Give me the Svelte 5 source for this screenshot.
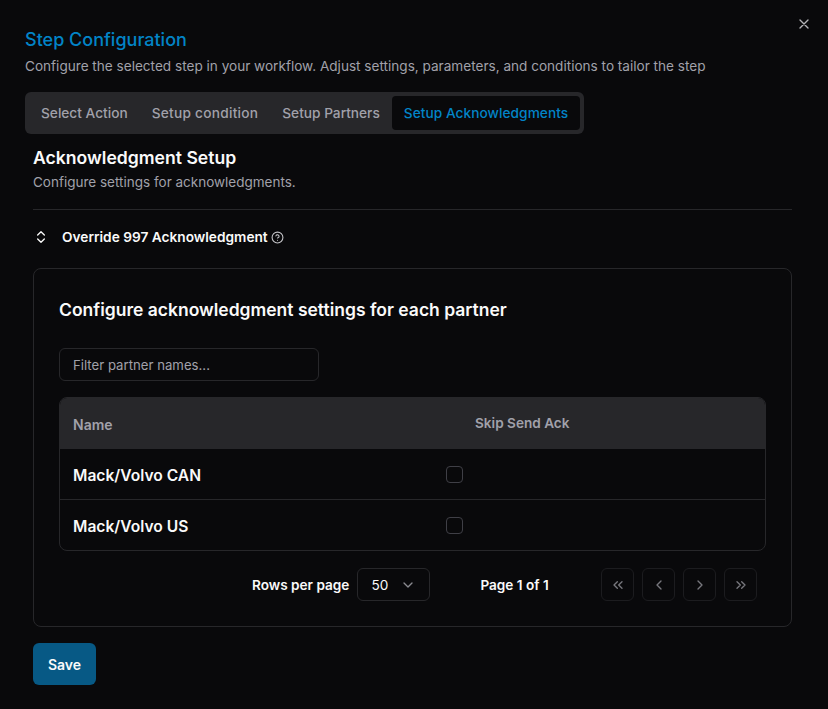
<script>
	const tabs = ['Select Action', 'Setup condition', 'Setup Partners', 'Setup Acknowledgments'];
	const partners = ['Mack/Volvo CAN', 'Mack/Volvo US'];
	const pager = [
		'm11 17-5-5 5-5M18 17l-5-5 5-5',
		'm15 18-6-6 6-6',
		'm9 18 6-6-6-6',
		'm6 17 5-5-5-5M13 17l5-5-5-5'
	];
</script>

<div class="dialog">
	<button class="close" aria-label="Close">
		<svg viewBox="0 0 24 24" width="16" height="16"><path d="M18 6 6 18M6 6l12 12" /></svg>
	</button>

	<h1>Step Configuration</h1>
	<p class="lead">Configure the selected step in your workflow. Adjust settings, parameters, and conditions to tailor the step</p>

	<div class="tabs">
		{#each tabs as tab, i}
			<div class="tab" class:active={i === tabs.length - 1}>{tab}</div>
		{/each}
	</div>

	<div class="content">
		<h2>Acknowledgment Setup</h2>
		<p class="hint">Configure settings for acknowledgments.</p>
		<div class="rule"></div>

		<div class="override">
			<svg class="updown" viewBox="0 0 24 24" width="16" height="16"><path d="m7 15 5 5 5-5M7 9l5-5 5 5" /></svg>
			<span>Override 997 Acknowledgment</span>
			<svg class="help" viewBox="0 0 24 24" width="13" height="13">
				<circle cx="12" cy="12" r="10" />
				<path d="M9.1 9a3 3 0 0 1 5.8 1c0 2-3 3-3 3M12 17h.01" />
			</svg>
		</div>

		<section class="card">
			<h3>Configure acknowledgment settings for each partner</h3>
			<div class="filter">Filter partner names...</div>

			<div class="table">
				<div class="row head">
					<div class="name">Name</div>
					<div class="skip">Skip Send Ack</div>
				</div>
				{#each partners as partner}
					<div class="row">
						<div class="name">{partner}</div>
						<div class="check"><span class="box"></span></div>
					</div>
				{/each}
			</div>

			<div class="footer">
				<span class="label">Rows per page</span>
				<div class="select">
					<span>50</span>
					<svg viewBox="0 0 24 24" width="16" height="16"><path d="m6 9 6 6 6-6" /></svg>
				</div>
				<span class="page">Page 1 of 1</span>
				<div class="pager">
					{#each pager as d}
						<div class="pg"><svg viewBox="0 0 24 24" width="16" height="16"><path {d} /></svg></div>
					{/each}
				</div>
			</div>
		</section>

		<button class="save">Save</button>
	</div>
</div>

<style>
	:global(body) {
		background: #09090b;
	}

	.dialog {
		position: relative;
		box-sizing: border-box;
		height: 709px;
		padding: 28px 36px 0 25px;
		background: #09090b;
		color: #fafafa;
		font-family: Inter, "Noto Sans", sans-serif;
		font-size: 14px;
		overflow: hidden;
	}

	svg path,
	svg circle {
		fill: none;
		stroke: currentColor;
		stroke-width: 2;
		stroke-linecap: round;
		stroke-linejoin: round;
	}

	.close {
		position: absolute;
		top: 16px;
		right: 16px;
		display: flex;
		padding: 0;
		background: none;
		border: none;
		color: #b4b4b8;
	}

	h1 {
		margin: 0;
		font-size: 18px;
		line-height: 23px;
		font-weight: 500;
		color: #0284c7;
	}

	.lead {
		margin: 5px 0 0;
		font-size: 13.58px;
		line-height: 20px;
		color: #a1a1aa;
		white-space: nowrap;
	}

	.tabs {
		display: inline-flex;
		margin-top: 16px;
		padding: 4px;
		height: 42px;
		box-sizing: border-box;
		background: #27272a;
		border-radius: 6px;
	}

	.tab {
		display: flex;
		align-items: center;
		padding: 0 12px;
		border-radius: 4px;
		font-size: 13.7px;
		font-weight: 500;
		color: #a1a1aa;
		white-space: nowrap;
	}

	.tab:nth-child(2) {
		letter-spacing: 0.25px;
	}

	.tab.active {
		background: #09090b;
		color: #0284c7;
		letter-spacing: 0.05px;
	}

	.content {
		margin-left: 8px;
	}

	h2 {
		margin: 12px 0 0;
		font-size: 17.6px;
		line-height: 24px;
		font-weight: 600;
	}

	.hint {
		margin: 3px 0 0;
		font-size: 13.5px;
		line-height: 18px;
		color: #a1a1aa;
	}

	.rule {
		height: 1px;
		margin-top: 18px;
		background: #27272a;
	}

	.override {
		display: flex;
		align-items: center;
		height: 20px;
		margin-top: 17px;
		font-size: 13.7px;
		font-weight: 600;
	}

	.updown {
		margin-right: 13px;
	}

	.help {
		margin-left: 3px;
		color: #c4c4c8;
	}

	.card {
		box-sizing: border-box;
		height: 359px;
		margin-top: 21px;
		padding: 29px 25px 0;
		border: 1px solid #27272a;
		border-radius: 8px;
	}

	h3 {
		margin: 0;
		font-size: 17.5px;
		line-height: 24px;
		font-weight: 600;
	}

	.filter {
		box-sizing: border-box;
		width: 260px;
		height: 33px;
		margin-top: 26px;
		padding-left: 13px;
		line-height: 33px;
		border: 1px solid #27272a;
		border-radius: 6px;
		font-size: 13.2px;
		color: #a1a1aa;
	}

	.table {
		margin-top: 16px;
		border: 1px solid #27272a;
		border-radius: 8px;
		overflow: hidden;
	}

	.row {
		display: flex;
		align-items: center;
		height: 50px;
		padding-left: 13px;
		border-top: 1px solid #27272a;
		font-size: 15.6px;
		font-weight: 600;
	}

	.row .name {
		padding-top: 2px;
	}

	.row.head {
		height: 50px;
		border-top: none;
		background: #27272a;
		font-size: 14px;
		color: #a1a1aa;
	}

	.name {
		width: 373px;
		flex: none;
	}

	.skip {
		margin-left: 29px;
		font-size: 13.6px;
	}

	.box {
		display: block;
		box-sizing: border-box;
		width: 17px;
		height: 17px;
		border: 1px solid #3f3f46;
		border-radius: 4px;
	}

	.footer {
		display: flex;
		align-items: center;
		margin-top: 17px;
		font-size: 13.6px;
		font-weight: 600;
	}

	.label {
		margin-left: 193px;
	}

	.select {
		box-sizing: border-box;
		display: flex;
		align-items: center;
		justify-content: space-between;
		width: 73px;
		height: 33px;
		margin-left: 8px;
		padding: 0 13px;
		border: 1px solid #27272a;
		border-radius: 6px;
		font-weight: 400;
	}

	.select svg {
		color: #8a8a90;
	}

	.page {
		margin-left: 50px;
	}

	.pager {
		display: flex;
		gap: 8px;
		margin-left: auto;
		margin-right: 9px;
	}

	.pg {
		box-sizing: border-box;
		display: flex;
		align-items: center;
		justify-content: center;
		width: 33px;
		height: 33px;
		border: 1px solid #1c1c1f;
		border-radius: 6px;
		color: #77777d;
	}

	.save {
		display: block;
		width: 63px;
		height: 42px;
		margin-top: 16px;
		padding: 0;
		background: #075985;
		border: none;
		border-radius: 6px;
		color: #fafafa;
		font-family: inherit;
		font-size: 14px;
		font-weight: 600;
	}
</style>
